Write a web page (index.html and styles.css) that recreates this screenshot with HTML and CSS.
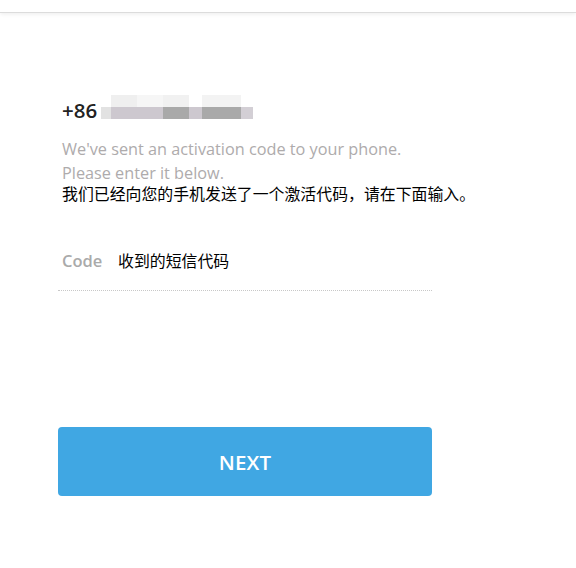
FILE: index.html
```html
<!DOCTYPE html>
<html>
<head>
<meta charset="utf-8">
<link rel="stylesheet" href="styles.css">
</head>
<body>
<div class="topbar"></div>
<main class="content">
  <div class="phone">
    <span class="code">+86</span>
    <span class="masked">
      <span class="m-row m-top">
        <i class="p p1"></i><i class="p p2"></i><i class="p p3"></i><i class="p p4"></i><i class="p p5"></i>
      </span>
      <span class="m-row m-mid">
        <i class="q q0"></i><i class="q q1"></i><i class="q q2"></i><i class="q q3"></i><i class="q q4"></i><i class="q q5"></i>
      </span>
    </span>
  </div>
  <p class="hint">We've sent an activation code to your phone.<br>Please enter it below.</p>
  <p class="hint-cn">我们已经向您的手机发送了一个激活代码，请在下面输入。</p>
  <div class="field">
    <span class="label">Code</span>
    <span class="value">收到的短信代码</span>
  </div>
  <button class="next">NEXT</button>
</main>
</body>
</html>
```
FILE: styles.css
```css
html, body {
  margin: 0;
  padding: 0;
  background: #fff;
}
body {
  font-family: "Open Sans", "Noto Sans CJK SC", sans-serif;
}
.topbar {
  height: 12px;
  border-bottom: 1px solid #dcdcdc;
  box-shadow: 0 1px 4px rgba(0, 0, 0, 0.08);
  background: #fff;
}
.content {
  width: 374px;
  margin-left: 58px;
  padding-top: 82px;
}
.phone {
  display: flex;
  align-items: center;
  height: 30px;
  padding-left: 4px;
}
.code {
  font-size: 20.5px;
  font-weight: 600;
  color: #222;
  line-height: 30px;
}
.masked {
  display: flex;
  flex-direction: column;
  margin-left: 4px;
  margin-top: -6px;
}
.m-row {
  display: flex;
}
.m-top {
  height: 12px;
  padding-left: 10px;
}
.m-mid {
  height: 12px;
}
.p, .q {
  display: block;
  height: 100%;
}
.p1 { width: 26px; background: #efefef; }
.p2 { width: 26px; background: #f6f6f6; }
.p3 { width: 26px; background: #f1f1f1; }
.p4 { width: 13px; background: #fff; }
.p5 { width: 39px; background: #f3f3f3; }
.q0 { width: 10px; background: #e2e2e2; }
.q1 { width: 52px; background: #cdc8cf; }
.q2 { width: 26px; background: #a9a9a9; }
.q3 { width: 13px; background: #cdc8cf; }
.q4 { width: 39px; background: #a9a9a9; }
.q5 { width: 12px; background: #d3cfd5; }
.hint {
  margin: 12px 0 0 4px;
  font-size: 16.25px;
  line-height: 24px;
  color: #aeabac;
}
.hint-cn {
  margin: -1px 0 0 4px;
  font-family: "Noto Sans CJK SC", sans-serif;
  font-size: 15.9px;
  line-height: 20px;
  color: #000;
  white-space: nowrap;
}
.field {
  display: flex;
  align-items: center;
  height: 30px;
  margin-top: 41px;
  padding-left: 4px;
  padding-bottom: 15px;
  border-bottom: 1px dotted #c8c8c8;
}
.label {
  font-size: 16.5px;
  font-weight: 600;
  color: #aaa;
  width: 56px;
}
.value {
  font-family: "Noto Sans CJK SC", sans-serif;
  font-size: 15.9px;
  color: #000;
}
.next {
  display: block;
  width: 374px;
  height: 69px;
  margin-top: 136px;
  border: 0;
  border-radius: 4px;
  background: #40a7e3;
  color: #fff;
  font-family: "Open Sans", sans-serif;
  font-size: 20.5px;
  font-weight: 600;
  letter-spacing: 0.2px;
}
```
